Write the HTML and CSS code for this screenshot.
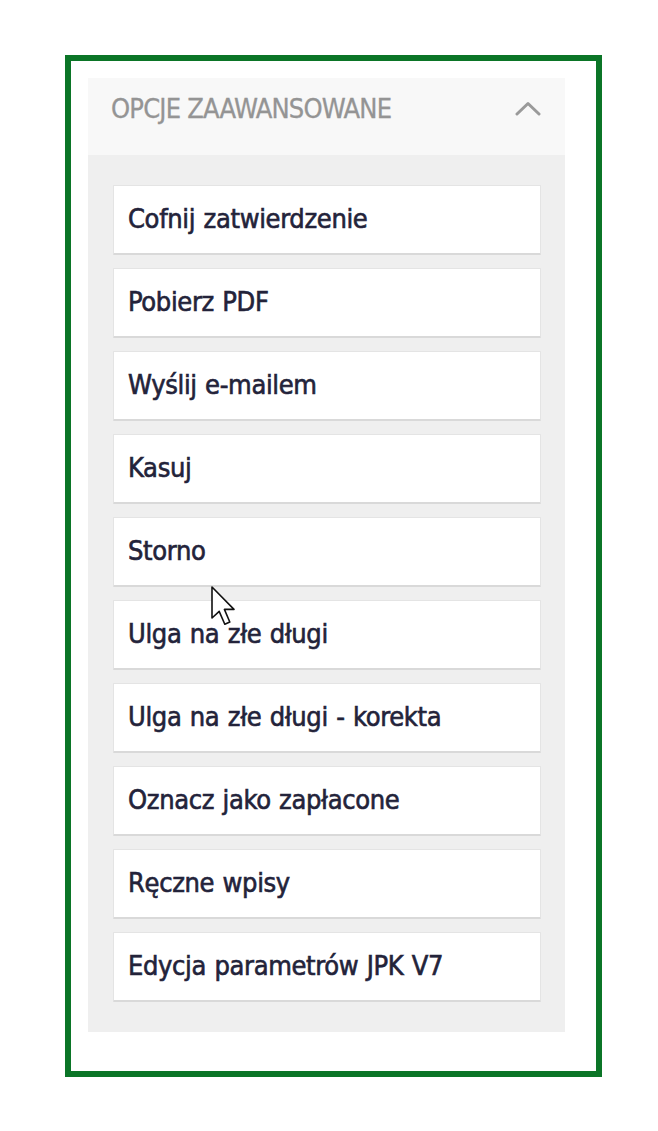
FILE: index.html
```html
<!DOCTYPE html>
<html lang="pl">
<head>
<meta charset="utf-8">
<title>Opcje zaawansowane</title>
<link rel="stylesheet" href="styles.css">
</head>
<body>
<div class="frame">
  <section class="panel">
    <header class="panel-head">
      <span class="panel-title">OPCJE ZAAWANSOWANE</span>
      <svg class="chevron" width="28" height="16" viewBox="0 0 28 16" aria-hidden="true">
        <polyline points="3,14 14,3.5 25,14" fill="none" stroke="#9a9a9a" stroke-width="3" stroke-linecap="round" stroke-linejoin="round"/>
      </svg>
    </header>
    <div class="panel-body">
      <button class="opt">Cofnij zatwierdzenie</button>
      <button class="opt">Pobierz PDF</button>
      <button class="opt">Wyślij e-mailem</button>
      <button class="opt">Kasuj</button>
      <button class="opt">Storno</button>
      <button class="opt">Ulga na złe długi</button>
      <button class="opt">Ulga na złe długi - korekta</button>
      <button class="opt">Oznacz jako zapłacone</button>
      <button class="opt">Ręczne wpisy</button>
      <button class="opt">Edycja parametrów JPK V7</button>
    </div>
  </section>
</div>
<svg class="cursor" width="32" height="42" viewBox="0 0 16 21" aria-hidden="true">
  <path d="M1,1 L1,16.5 L4.6,13.2 L7.4,19.6 L9.9,18.5 L7.2,12.2 L12,12.2 Z" fill="#ffffff" stroke="#111111" stroke-width="0.8" stroke-linejoin="round"/>
</svg>
</body>
</html>
```

FILE: styles.css
```css
html, body {
  margin: 0;
  padding: 0;
  background: #ffffff;
}

body {
  position: relative;
  width: 658px;
  height: 1131px;
  overflow: hidden;
  font-family: "DejaVu Sans Condensed", "DejaVu Sans", sans-serif;
  font-stretch: condensed;
}

.frame {
  box-sizing: border-box;
  margin: 55px 0 0 65px;
  width: 537px;
  height: 1022px;
  border: 6px solid #0b7527;
  padding: 17px 31px 0 17px;
}

.panel {
  width: 477px;
}

.panel-head {
  height: 77px;
  background: #f8f8f8;
  display: flex;
  align-items: center;
  justify-content: space-between;
  padding: 0 23px 16px 23px;
  box-sizing: border-box;
}

.panel-title {
  color: #949494;
  font-size: 27px;
  letter-spacing: -0.8px;
  -webkit-text-stroke: 0.3px #949494;
}

.chevron {
  display: block;
  margin-top: -2px;
}

.panel-body {
  background: #efefef;
  padding: 30px 24px 30px 25px;
  display: flex;
  flex-direction: column;
  gap: 13px;
}

.opt {
  box-sizing: border-box;
  height: 70px;
  background: #ffffff;
  border: 1px solid #e4e4e4;
  border-bottom: 2px solid #d9d9d9;
  border-radius: 1px;
  padding: 0 0 2px 14px;
  text-align: left;
  font-family: inherit;
  font-stretch: condensed;
  font-size: 27px;
  font-weight: 400;
  letter-spacing: -0.35px;
  word-spacing: 1px;
  color: #23233a;
  -webkit-text-stroke: 0.6px #23233a;
  cursor: pointer;
}

.cursor {
  position: absolute;
  left: 210px;
  top: 585px;
}
```
